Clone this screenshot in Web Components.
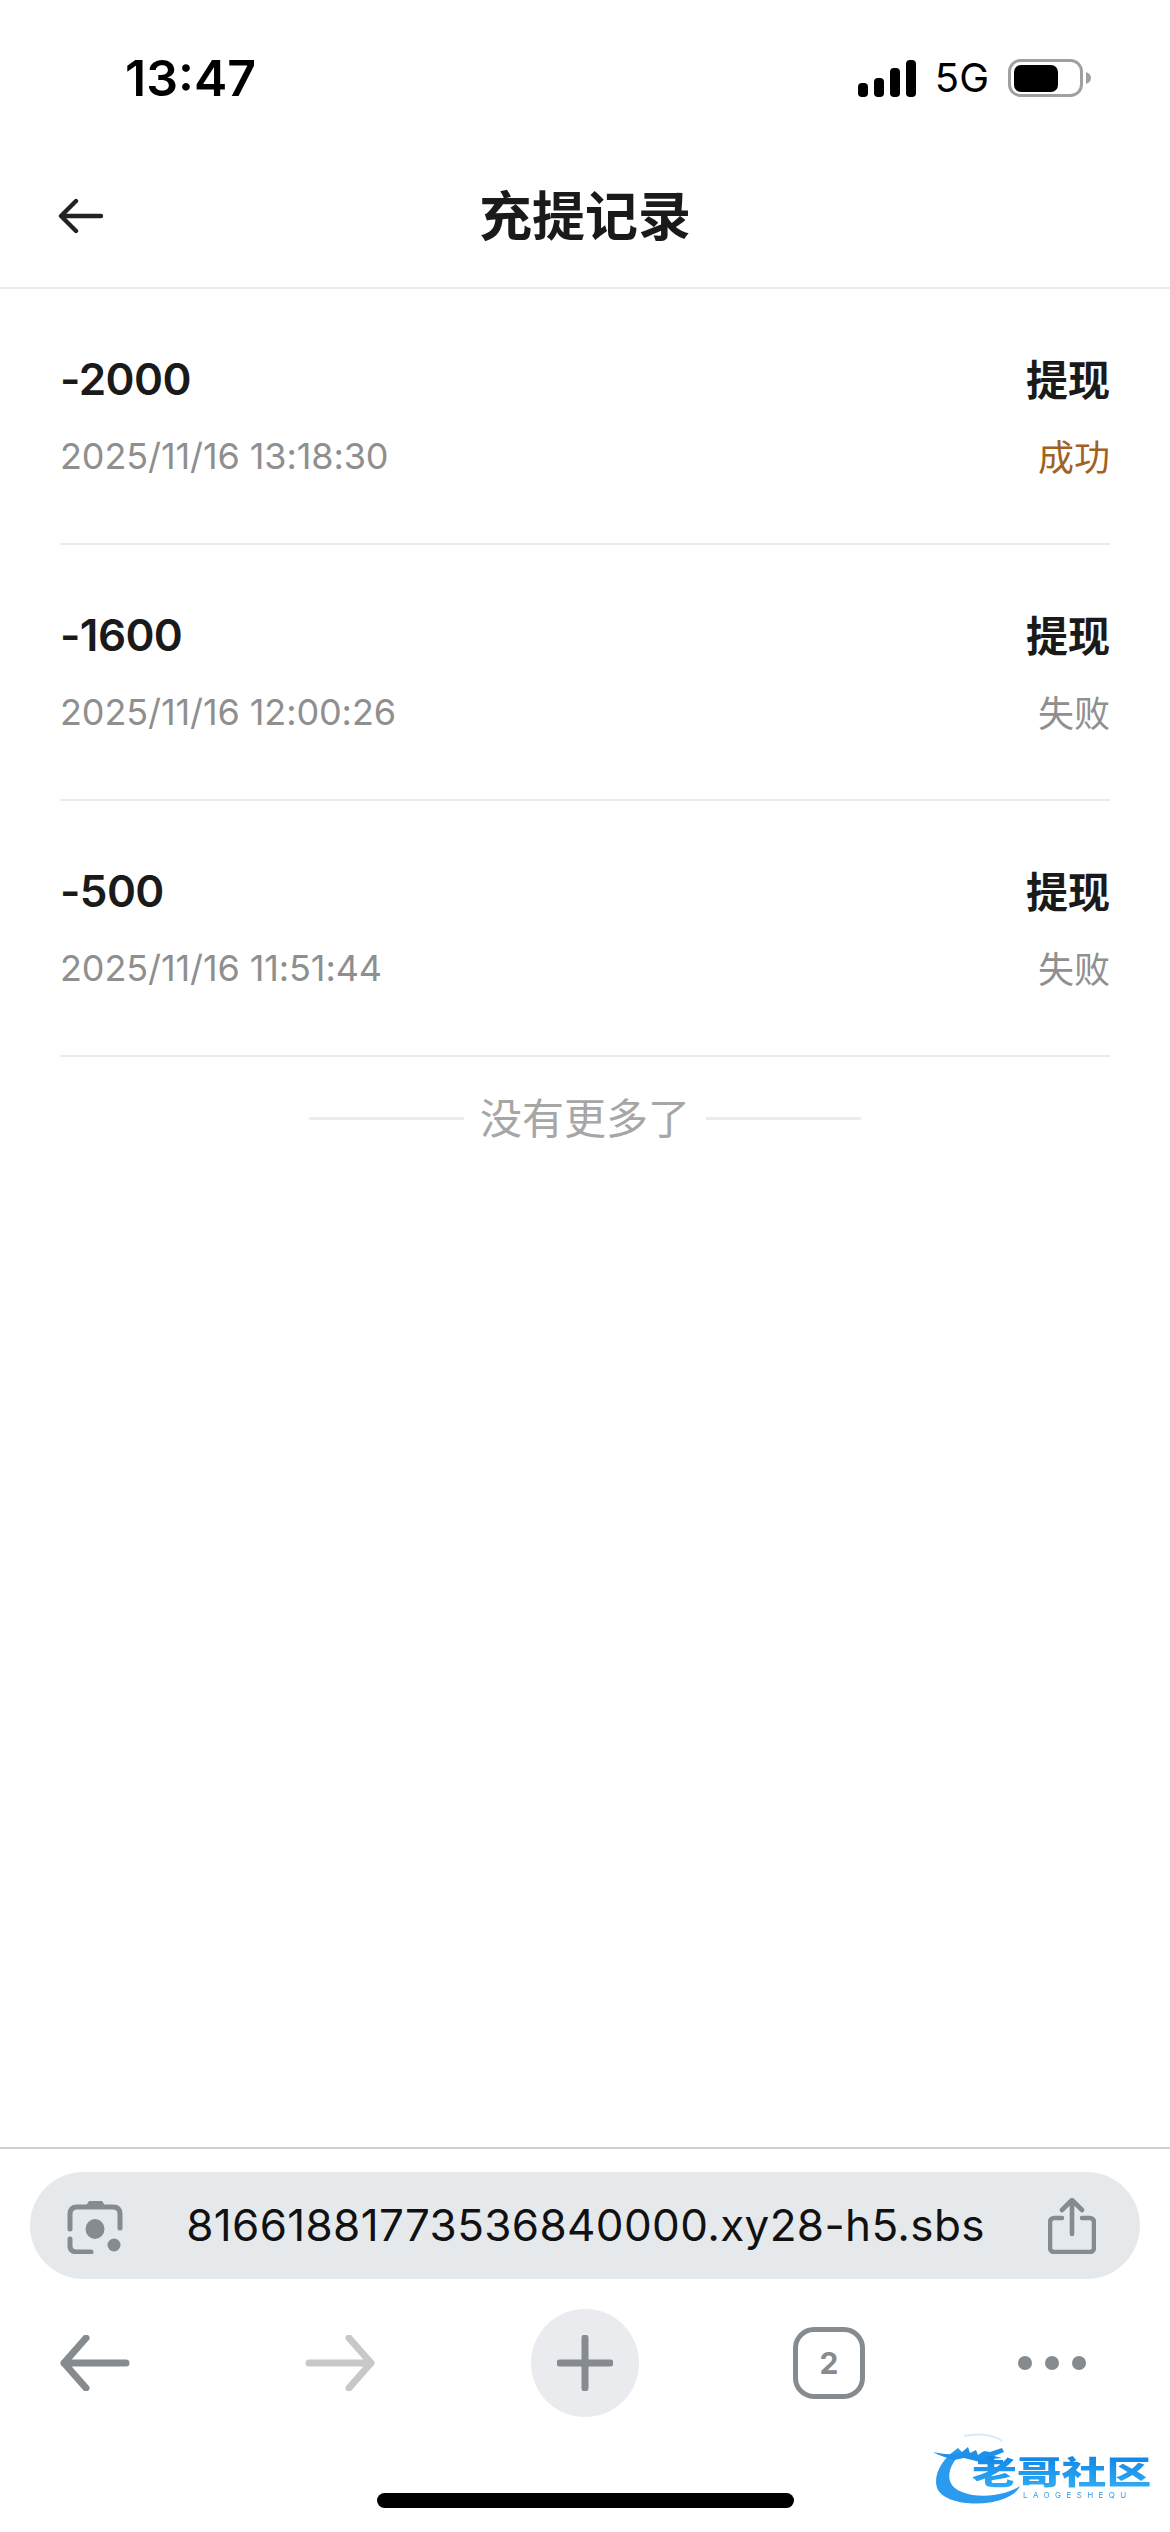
<!DOCTYPE html>
<html lang="zh">
<head>
<meta charset="utf-8">
<title>充提记录</title>
<style type="text/css">
    html, body {
        margin: 0;
        background: #fff;
    }
    body {
        width: 1170px;
        height: 2532px;
        overflow: hidden;
        position: relative;
        display: flex;
        flex-direction: column;
        font-family: Inter, "Noto Sans CJK SC", sans-serif;
    }
    .list {
        flex: 1;
        display: block;
    }
</style>
</head>
<body>
<status-bar time="13:47" network="5G"></status-bar>
<nav-bar>充提记录</nav-bar>
<div class="list">
    <record-row amount="-2000" date="2025/11/16 13:18:30" kind="提现" status="成功" state="ok"></record-row>
    <record-row amount="-1600" date="2025/11/16 12:00:26" kind="提现" status="失败"></record-row>
    <record-row amount="-500" date="2025/11/16 11:51:44" kind="提现" status="失败"></record-row>
    <list-end>没有更多了</list-end>
</div>
<browser-bar url="81661881773536840000.xy28-h5.sbs" tabs="2"></browser-bar>
<site-mark></site-mark>

<template id="status-bar">
    <style type="text/css">
        :host {
            display: flex;
            height: 108px;
            box-sizing: border-box;
            padding: 53px 79px 0 125px;
            justify-content: space-between;
            align-items: flex-start;
            color: #000;
        }
        .time {
            font-size: 50px;
            line-height: 50px;
            font-weight: 600;
        }
        .icons {
            display: flex;
            align-items: center;
            margin-top: 5px;
        }
        .net {
            font-size: 40px;
            line-height: 40px;
            margin: 0 19px 0 19px;
        }
        svg {
            display: block;
        }
    </style>
    <div class="time"></div>
    <div class="icons">
        <svg width="58" height="37" viewBox="0 0 58 37">
            <rect x="0" y="23" width="10" height="14" rx="4"/>
            <rect x="16" y="18" width="10" height="19" rx="4"/>
            <rect x="32" y="8" width="10" height="29" rx="4"/>
            <rect x="48" y="0" width="10" height="37" rx="4"/>
        </svg>
        <span class="net"></span>
        <svg width="83" height="38" viewBox="0 0 83 38">
            <rect x="1.5" y="1.5" width="72" height="35" rx="11" fill="#fff" stroke="#a0a0a0" stroke-width="3"/>
            <rect x="6" y="6" width="44" height="27" rx="7"/>
            <path d="M78 13c3 1 5 3 5 6s-2 5-5 6z" fill="#a0a0a0"/>
        </svg>
    </div>
</template>

<template id="nav-bar">
    <style type="text/css">
        :host {
            display: flex;
            height: 181px;
            box-sizing: border-box;
            border-bottom: 2px solid #ebebeb;
            align-items: center;
            justify-content: center;
            position: relative;
            padding-top: 30px;
        }
        .title {
            font-size: 53px;
            font-weight: 700;
            color: #1a1a1a;
        }
        svg {
            position: absolute;
            left: 58px;
            top: 90px;
        }
    </style>
    <svg width="46" height="36" viewBox="0 0 46 36" fill="none" stroke="#222" stroke-width="4.4" stroke-linecap="round" stroke-linejoin="round">
        <path d="M43 18H4M18 3L3 18l15 15"/>
    </svg>
    <div class="title"><slot></slot></div>
</template>

<template id="record-row">
    <style type="text/css">
        :host {
            display: block;
            margin: 0 60px;
            height: 256px;
            box-sizing: border-box;
            border-bottom: 2px solid #ebebeb;
            padding-top: 64px;
        }
        .line {
            display: flex;
            justify-content: space-between;
            align-items: center;
        }
        .top {
            height: 52px;
            font-size: 44px;
            font-weight: 600;
            color: #1a1a1a;
        }
        .amount {
            letter-spacing: -0.6px;
        }
        .kind {
            font-size: 42px;
            font-weight: 700;
            margin-top: -3px;
        }
        .bottom {
            height: 52px;
            margin-top: 25px;
            font-size: 36px;
            color: #8f8f8f;
        }
        .date {
            letter-spacing: -0.1px;
        }
        .status {
            margin-top: -3px;
        }
        .ok {
            color: #a0621f;
        }
    </style>
    <div class="line top"><span class="amount"></span><span class="kind"></span></div>
    <div class="line bottom"><span class="date"></span><span class="status"></span></div>
</template>

<template id="list-end">
    <style type="text/css">
        :host {
            display: flex;
            justify-content: center;
            align-items: center;
            gap: 16px;
            height: 122px;
            font-size: 42px;
            color: #a6a6a6;
        }
        i {
            display: block;
            width: 155px;
            height: 3px;
            background: #ececec;
        }
        span {
            margin-top: -5px;
        }
    </style>
    <i></i><span><slot></slot></span><i></i>
</template>

<template id="browser-bar">
    <style type="text/css">
        :host {
            display: block;
            height: 385px;
            box-sizing: border-box;
            border-top: 2px solid #cfcfcf;
            padding: 23px 30px 0;
        }
        svg {
            display: block;
            flex: none;
        }
        .pill {
            display: flex;
            align-items: center;
            justify-content: space-between;
            height: 107px;
            padding: 0 44px 0 37px;
            border-radius: 54px;
            background: #e6e9ec;
        }
        .url {
            font-size: 44px;
            color: #111;
            letter-spacing: 0.36px;
            margin-top: -2px;
        }
        .tools {
            display: grid;
            grid-template-columns: 130px 360px 130px 358px 88px;
            align-items: center;
            height: 108px;
            margin-top: 30px;
        }
        .tools > * {
            justify-self: center;
        }
        .plus {
            width: 108px;
            height: 108px;
            border-radius: 50%;
            background: #e9ebee;
            display: flex;
            align-items: center;
            justify-content: center;
        }
        .tabs {
            box-sizing: border-box;
            width: 72px;
            height: 72px;
            border: 5px solid #858b8f;
            border-radius: 21px;
            display: flex;
            align-items: center;
            justify-content: center;
            font-size: 30px;
            font-weight: 700;
            color: #858b8f;
        }
        .home {
            width: 417px;
            height: 15px;
            border-radius: 8px;
            background: #000;
            margin: 76px auto 0;
        }
    </style>
    <div class="pill">
        <svg width="56" height="56" viewBox="0 0 56 56" fill="none" stroke="#858b8f" stroke-width="5" stroke-linecap="round">
            <path d="M3 31V16c0-5 3-7 7-7h36c4 0 7 2 7 7v14"/>
            <path d="M3 41v7c0 4 3 6 7 6h14"/>
            <path d="M18 9l4-6h13l4 6z" fill="#858b8f" stroke="none"/>
            <ellipse cx="28" cy="31" rx="9.5" ry="10" fill="#858b8f" stroke="none"/>
            <circle cx="47" cy="47" r="6.5" fill="#858b8f" stroke="none"/>
        </svg>
        <span class="url"></span>
        <svg width="48" height="56" viewBox="0 0 48 56" fill="none" stroke="#858b8f" stroke-width="4.6" stroke-linecap="round" stroke-linejoin="round">
            <path d="M14 20H6c-2 0-4 2-4 4v26c0 2 2 4 4 4h36c2 0 4-2 4-4V24c0-2-2-4-4-4h-8"/>
            <path d="M24 36V3M14 12l10-10 10 10"/>
        </svg>
    </div>
    <div class="tools">
        <svg width="70" height="56" viewBox="0 0 70 56" fill="none" stroke="#858b8f" stroke-width="7" stroke-linecap="round" stroke-linejoin="round">
            <path d="M66 28H4M26 3L4 28l22 25"/>
        </svg>
        <svg width="70" height="56" viewBox="0 0 70 56" fill="none" stroke="#c8c8c8" stroke-width="7" stroke-linecap="round" stroke-linejoin="round">
            <path d="M4 28h62M44 3l22 25-22 25"/>
        </svg>
        <div class="plus">
            <svg width="56" height="56" viewBox="0 0 56 56" fill="none" stroke="#858b8f" stroke-width="7" stroke-linecap="round">
                <path d="M28 3v50M3 28h50"/>
            </svg>
        </div>
        <div class="tabs"></div>
        <svg width="70" height="16" viewBox="0 0 70 16" fill="#858b8f">
            <circle cx="8" cy="8" r="7"/><circle cx="35" cy="8" r="7"/><circle cx="62" cy="8" r="7"/>
        </svg>
    </div>
    <div class="home"></div>
</template>

<template id="site-mark">
    <style type="text/css">
        :host {
            display: block;
            position: absolute;
            left: 932px;
            top: 2432px;
            width: 222px;
            height: 76px;
            filter: blur(0.5px);
        }
        svg {
            position: absolute;
            left: 0;
            top: 0;
        }
        .name {
            position: absolute;
            left: 40px;
            top: 23px;
            font-size: 32px;
            line-height: 36px;
            font-weight: 900;
            white-space: nowrap;
            background: linear-gradient(#0f86e6, #35aef5);
            -webkit-background-clip: text;
            background-clip: text;
            color: transparent;
            transform: scaleX(1.4);
            transform-origin: left top;
        }
        .sub {
            position: absolute;
            left: 91px;
            top: 59px;
            font-size: 8px;
            line-height: 9px;
            letter-spacing: 5.4px;
            color: #3a9be6;
            white-space: nowrap;
        }
    </style>
    <svg width="222" height="76" viewBox="0 0 222 76" fill="none">
        <path d="M26 16C8 28 0 46 6 58c8 14 44 18 68 8 6-3 11-6 14-12C76 62 50 68 30 60 14 54 12 38 30 20z" fill="#2a9bee"/>
        <path d="M1 20c9 2 19 4 29 0l6-5 2 6 6-3 2 5 6-4 6 1 12-4 2 4-10 4 8 2-10 1-8 4-12-3-8-2-10 2c-6-2-14-4-21-8z" fill="#1f8fea"/>
        <path d="M32 4C44 1 60 2 70 9" stroke="#d4ebfb" stroke-width="2"/>
    </svg>
    <span class="name">老哥社区</span>
    <span class="sub">LAOGESHEQU</span>
</template>

<script type="application/javascript">
    (function (window, document) {

        // clones the template with the same id as the tag into an open shadow root
        function mount(el, id) {
            var shadow = el.attachShadow({mode: 'open'});
            shadow.appendChild(document.importNode(document.getElementById(id).content, true));
            return shadow;
        }

        class StatusBar extends HTMLElement {
            connectedCallback() {
                var root = mount(this, 'status-bar');
                root.querySelector('.time').textContent = this.getAttribute('time');
                root.querySelector('.net').textContent = this.getAttribute('network');
            }
        }

        class NavBar extends HTMLElement {
            connectedCallback() {
                mount(this, 'nav-bar');
            }
        }

        class RecordRow extends HTMLElement {
            connectedCallback() {
                var root = mount(this, 'record-row');
                root.querySelector('.amount').textContent = this.getAttribute('amount');
                root.querySelector('.date').textContent = this.getAttribute('date');
                root.querySelector('.kind').textContent = this.getAttribute('kind');
                var status = root.querySelector('.status');
                status.textContent = this.getAttribute('status');
                if (this.getAttribute('state') == 'ok') {
                    status.classList.add('ok');
                }
            }
        }

        class ListEnd extends HTMLElement {
            connectedCallback() {
                mount(this, 'list-end');
            }
        }

        class BrowserBar extends HTMLElement {
            connectedCallback() {
                var root = mount(this, 'browser-bar');
                root.querySelector('.url').textContent = this.getAttribute('url');
                root.querySelector('.tabs').textContent = this.getAttribute('tabs');
            }
        }

        class SiteMark extends HTMLElement {
            connectedCallback() {
                mount(this, 'site-mark');
            }
        }

        window.customElements.define('status-bar', StatusBar);
        window.customElements.define('nav-bar', NavBar);
        window.customElements.define('record-row', RecordRow);
        window.customElements.define('list-end', ListEnd);
        window.customElements.define('browser-bar', BrowserBar);
        window.customElements.define('site-mark', SiteMark);
    })(window, document);
</script>
</body>
</html>
